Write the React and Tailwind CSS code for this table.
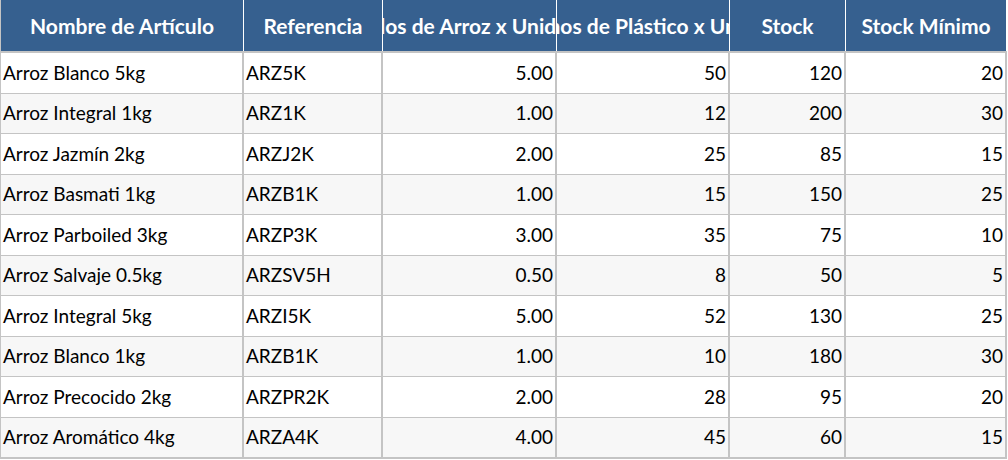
import React from 'react';

const columns = [
  { label: 'Nombre de Artículo', width: 'w-[243px]', align: 'left' },
  { label: 'Referencia', width: 'w-[139px]', align: 'left' },
  { label: 'Kilos de Arroz x Unidad', width: 'w-[174px]', align: 'right' },
  { label: 'Gramos de Plástico x Unidad', width: 'w-[173px]', align: 'right' },
  { label: 'Stock', width: 'w-[116px]', align: 'right' },
  { label: 'Stock Mínimo', width: 'w-[161px]', align: 'right' },
];

const rows = [
  ['Arroz Blanco 5kg', 'ARZ5K', '5.00', '50', '120', '20'],
  ['Arroz Integral 1kg', 'ARZ1K', '1.00', '12', '200', '30'],
  ['Arroz Jazmín 2kg', 'ARZJ2K', '2.00', '25', '85', '15'],
  ['Arroz Basmati 1kg', 'ARZB1K', '1.00', '15', '150', '25'],
  ['Arroz Parboiled 3kg', 'ARZP3K', '3.00', '35', '75', '10'],
  ['Arroz Salvaje 0.5kg', 'ARZSV5H', '0.50', '8', '50', '5'],
  ['Arroz Integral 5kg', 'ARZI5K', '5.00', '52', '130', '25'],
  ['Arroz Blanco 1kg', 'ARZB1K', '1.00', '10', '180', '30'],
  ['Arroz Precocido 2kg', 'ARZPR2K', '2.00', '28', '95', '20'],
  ['Arroz Aromático 4kg', 'ARZA4K', '4.00', '45', '60', '15'],
];

const App = () => {
  return (
    <div className="w-[1008px] h-[460px] bg-white font-['Lato',sans-serif] text-black">
      <div className="inline-flex flex-col border-l border-b border-[#c4c4c4]">
        <div className="flex h-[53px] bg-[#36608f] border-b-2 border-[#c4c4c4]">
          {columns.map((col) => (
            <div
              key={col.label}
              className={`${col.width} shrink-0 flex items-center justify-center overflow-hidden whitespace-nowrap border-r border-white text-white font-bold text-[21px]`}
            >
              <span className="shrink-0">{col.label}</span>
            </div>
          ))}
        </div>
        {rows.map((row, i) => (
          <div
            key={i}
            className={`flex h-[40.5px] border-b border-[#c4c4c4] ${i % 2 === 1 ? 'bg-[#f7f7f7]' : 'bg-white'}`}
          >
            {row.map((cell, j) => (
              <div
                key={j}
                className={`${columns[j].width} shrink-0 flex items-center px-[2px] border-r-2 border-[#c4c4c4] text-[19px] whitespace-nowrap overflow-hidden ${columns[j].align === 'right' ? 'justify-end' : 'justify-start'}`}
              >
                {cell}
              </div>
            ))}
          </div>
        ))}
      </div>
    </div>
  );
};

export default App;
